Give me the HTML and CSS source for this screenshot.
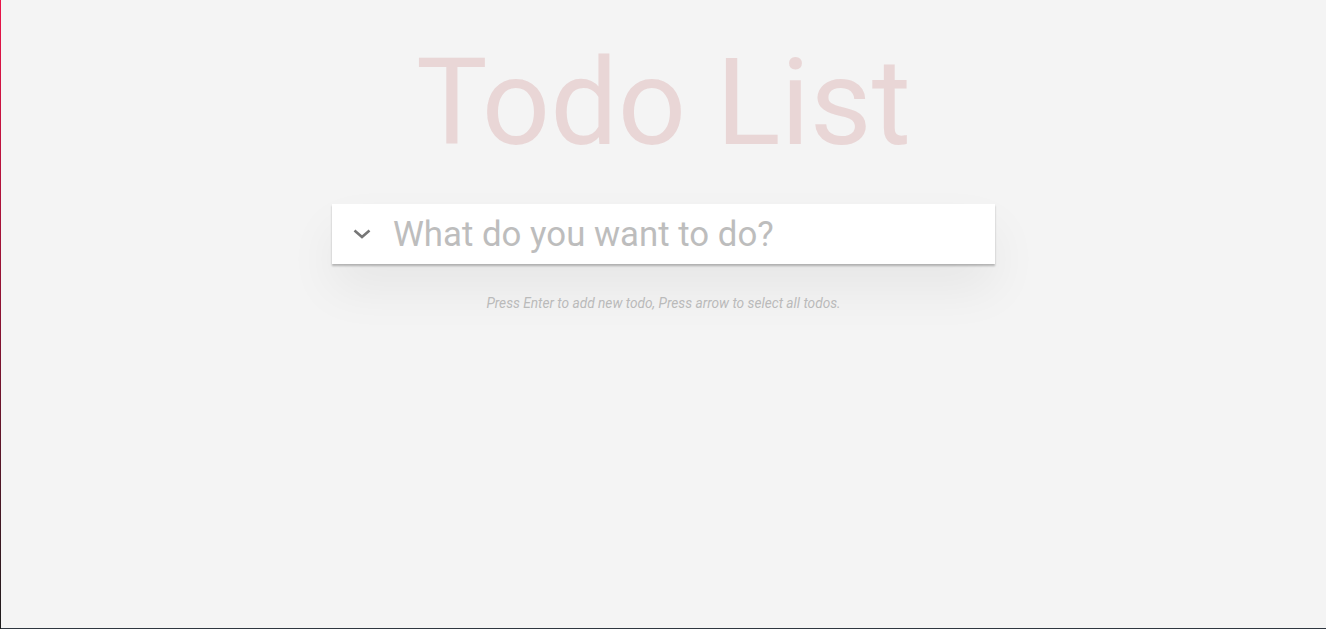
FILE: index.html
```html
<!DOCTYPE html>
<html lang="en">
<head>
<meta charset="utf-8">
<title>Todo List</title>
<link rel="stylesheet" href="styles.css">
</head>
<body>
<div class="frame">
  <h1 class="title">Todo List</h1>
  <section class="todoapp">
    <div class="entry">
      <span class="toggle-all" aria-label="Select all">
        <svg width="20" height="14" viewBox="0 0 20 14"><polyline points="2.5,3.5 10,10 17.5,3.5" fill="none" stroke="#767676" stroke-width="2.6" stroke-linecap="butt" stroke-linejoin="miter"/></svg>
      </span>
      <input class="new-todo" type="text" placeholder="What do you want to do?">
    </div>
    <p class="hint">Press Enter to add new todo, Press arrow to select all todos.</p>
  </section>
</div>
</body>
</html>
```

FILE: styles.css
```css
html, body {
  margin: 0;
  padding: 0;
  height: 100%;
}
body {
  background: #f4f4f4;
  font-family: Roboto, "Helvetica Neue", Arial, sans-serif;
}
.frame {
  box-sizing: border-box;
  min-height: 100vh;
  border-image: linear-gradient(#ea1449, #8c1232 50%, #1b1b1b) 1;
  border-style: solid;
  border-width: 0 0 0 1px;
  box-shadow: inset 0 -1px 0 #2f3740;
  display: flex;
  flex-direction: column;
  align-items: center;
}
.title {
  margin: 43px 0 0;
  font-size: 120px;
  line-height: 120px;
  font-weight: 400;
  color: rgba(175, 47, 47, 0.15);
  text-align: center;
}
.todoapp {
  margin-top: 41px;
  width: 663px;
}
.entry {
  display: flex;
  align-items: center;
  height: 60px;
  background: #fff;
  box-shadow: 0 2px 2px rgba(0, 0, 0, 0.25), 0 25px 50px 0 rgba(0, 0, 0, 0.06);
}
.toggle-all {
  display: flex;
  width: 61px;
  justify-content: center;
}
.toggle-all svg {
  display: block;
  margin-left: -2px;
}
.new-todo {
  flex: 1;
  border: 0;
  outline: none;
  padding: 0;
  height: 60px;
  font-family: Roboto, sans-serif;
  font-size: 34.8px;
  font-weight: 400;
  color: #4d4d4d;
  background: transparent;
}
.new-todo::placeholder {
  color: #bdbdbd;
}
.hint {
  margin: 31px 0 0;
  font-size: 13.7px;
  line-height: 16px;
  font-style: italic;
  color: #bababa;
  text-align: center;
}
```
